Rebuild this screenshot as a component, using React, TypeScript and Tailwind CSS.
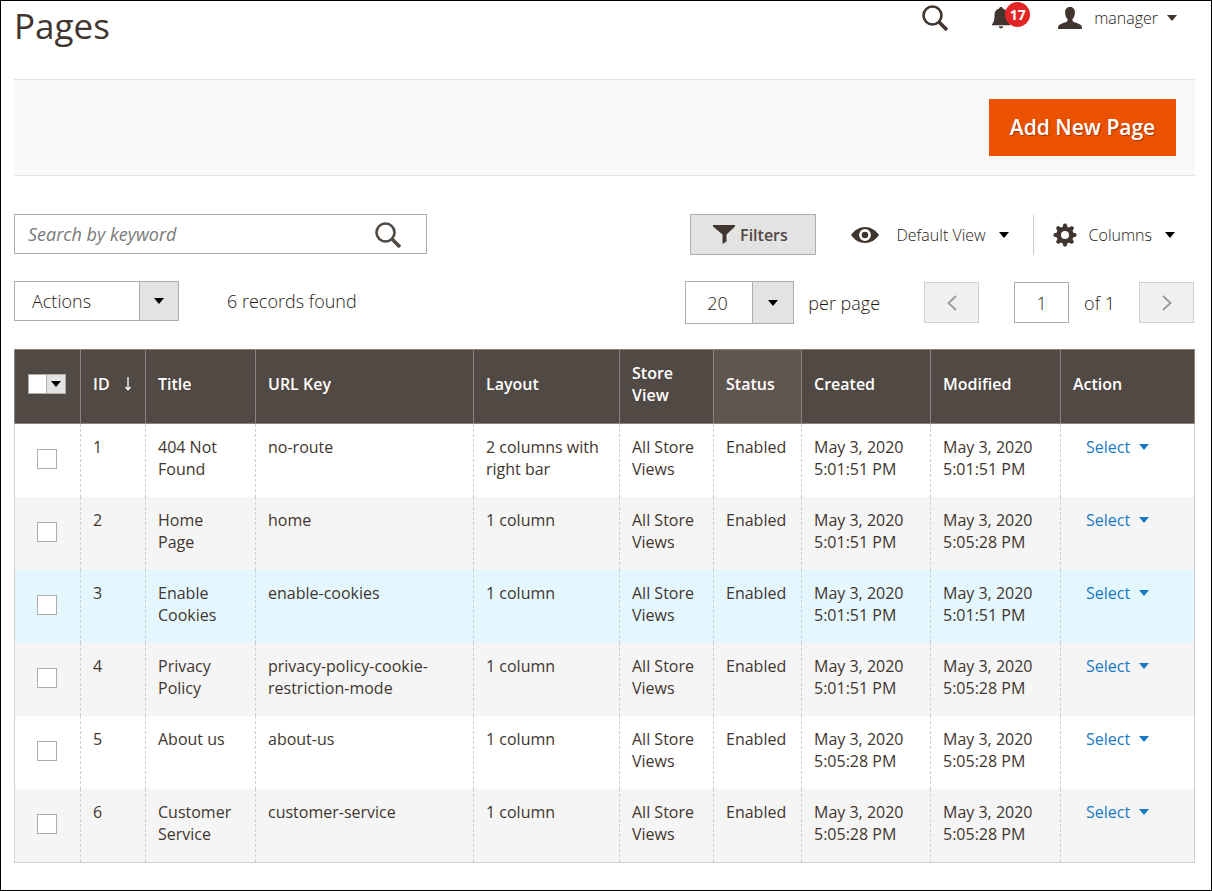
import { useState } from "react"

interface CmsPage {
  id: number
  title: string
  urlKey: string
  layout: string
  created: string
  modified: string
}

const PAGES: CmsPage[] = [
  { id: 1, title: "404 Not Found", urlKey: "no-route", layout: "2 columns with right bar", created: "5:01:51 PM", modified: "5:01:51 PM" },
  { id: 2, title: "Home Page", urlKey: "home", layout: "1 column", created: "5:01:51 PM", modified: "5:05:28 PM" },
  { id: 3, title: "Enable Cookies", urlKey: "enable-cookies", layout: "1 column", created: "5:01:51 PM", modified: "5:01:51 PM" },
  { id: 4, title: "Privacy Policy", urlKey: "privacy-policy-cookie-restriction-mode", layout: "1 column", created: "5:01:51 PM", modified: "5:05:28 PM" },
  { id: 5, title: "About us", urlKey: "about-us", layout: "1 column", created: "5:05:28 PM", modified: "5:05:28 PM" },
  { id: 6, title: "Customer Service", urlKey: "customer-service", layout: "1 column", created: "5:05:28 PM", modified: "5:05:28 PM" },
]

const HIGHLIGHTED_ID = 3

const TH = "border-x border-[#8a837f] px-3 pb-[5px] text-left align-middle font-semibold"
const TD = "border-x border-dashed border-[#d0d0d0] px-3 pt-3 pb-4 align-top"

function Caret({ className = "" }: { className?: string }) {
  return (
    <svg viewBox="0 0 10 6" className={`h-[6px] w-[10px] shrink-0 ${className}`} fill="currentColor" aria-hidden="true">
      <path d="M0 0h10L5 6z" />
    </svg>
  )
}

function SearchIcon() {
  return (
    <svg viewBox="0 0 26 26" className="size-[26px]" fill="none" stroke="currentColor" aria-hidden="true">
      <circle cx="10.5" cy="10.5" r="9" strokeWidth="2.6" />
      <path d="M17 17l8 8" strokeWidth="3.6" />
    </svg>
  )
}

function BellIcon() {
  return (
    <svg viewBox="0 0 20 22" className="h-[22px] w-5" fill="currentColor" aria-hidden="true">
      <path d="M10 0c1 0 1.800.7 1.800 1.600C15 2.400 16.500 4.800 16.500 8c0 5 .7 7.500 2.500 9.200V18.200H1v-1C2.800 15.500 3.500 13 3.500 8c0-3.200 1.500-5.600 4.700-6.400C8.200.7 9 0 10 0z" />
      <path d="M7.800 19.300h4.400c-.2 1.300-1 2.100-2.200 2.100s-2-.8-2.200-2.100z" />
    </svg>
  )
}

function UserIcon() {
  return (
    <svg viewBox="0 0 24 22" className="h-[22px] w-6" fill="currentColor" aria-hidden="true">
      <path d="M12 0c3 0 4.900 2 4.900 5.200 0 3-1 5.600-2.400 6.900-.3 1.600 0 2.400 1.300 2.900 3.200 1.200 5.600 1.800 7 2.900.9.700 1.200 1.900 1.200 4.100H0c0-2.200.3-3.400 1.200-4.100 1.400-1.100 3.800-1.700 7-2.900 1.300-.5 1.600-1.300 1.300-2.900C8.100 10.800 7.100 8.200 7.100 5.200 7.100 2 9 0 12 0z" />
    </svg>
  )
}

function FunnelIcon() {
  return (
    <svg viewBox="0 0 22 19" className="h-[19px] w-[22px]" fill="currentColor" aria-hidden="true">
      <path d="M0 0h22v1.500l-8.500 8v7L9.500 19V9.500L0 1.500z" />
    </svg>
  )
}

function EyeIcon() {
  return (
    <svg viewBox="0 0 28 16" className="h-4 w-7" aria-hidden="true">
      <path d="M0 8C3.500 3 8.500 0 14 0s10.500 3 14 8c-3.500 5-8.500 8-14 8S3.500 13 0 8z" fill="currentColor" />
      <circle cx="14" cy="8" r="4.600" fill="none" stroke="#fff" strokeWidth="2.600" />
    </svg>
  )
}

function GearIcon() {
  return (
    <svg viewBox="-12 -12 24 24" className="size-6" aria-hidden="true">
      <g fill="currentColor">
        {[0, 45, 90, 135, 180, 225, 270, 315].map((angle) => (
          <path key={angle} d="M-2.800-7L-1.500-11.200Q0-12 1.500-11.200L2.800-7z" transform={`rotate(${angle})`} />
        ))}
      </g>
      <circle r="6.300" fill="none" stroke="currentColor" strokeWidth="4.600" />
    </svg>
  )
}

function Chevron({ flip = false }: { flip?: boolean }) {
  return (
    <svg viewBox="0 0 10 16" className="h-4 w-[10px]" fill="none" stroke="currentColor" strokeWidth="1.800" aria-hidden="true">
      <path d={flip ? "M1 1l7.500 7L1 15" : "M9 1L1.500 8 9 15"} />
    </svg>
  )
}

function Header() {
  return (
    <header className="flex items-start justify-between pr-[18px]">
      <h1 className="text-[35px] leading-[50px] text-[#41362f]">Pages</h1>
      <div className="flex h-[34px] items-center text-[#41362f]">
        <button type="button" aria-label="Search" className="mr-[43px]">
          <SearchIcon />
        </button>
        <button type="button" aria-label="Notifications" className="relative mr-[47px]">
          <BellIcon />
          <span className="absolute -top-[5px] left-[14px] flex size-[25px] items-center justify-center rounded-full bg-[#e22626] text-sm font-bold text-white">
            17
          </span>
        </button>
        <button type="button" className="flex items-center">
          <UserIcon />
          <span className="ml-3 mr-[9px] text-base font-light text-[#1f1814]">manager</span>
          <Caret />
        </button>
      </div>
    </header>
  )
}

function Toolbar() {
  const [keyword, setKeyword] = useState("")

  return (
    <div className="mt-[38px] flex items-start justify-between">
      <form className="relative w-[35%]" onSubmit={(e) => e.preventDefault()}>
        <input
          type="text"
          aria-label="Search by keyword"
          placeholder="Search by keyword"
          value={keyword}
          onChange={(e) => setKeyword(e.target.value)}
          className="block h-10 w-full border border-[#adadad] bg-white pl-[13px] pr-16 text-lg text-[#303030] placeholder:italic placeholder:text-[#7a7a7a]"
        />
        <button type="submit" aria-label="Search" className="absolute right-[26px] top-2 text-[#514943]">
          <SearchIcon />
        </button>
      </form>

      <div className="flex items-center pr-5 text-base text-[#1f1814]">
        <button
          type="button"
          className="mr-[35px] flex h-[41px] w-[126px] items-center justify-center gap-[5px] border border-[#adadad] bg-[#e3e3e3] pr-[6px] font-semibold text-[#514943]"
        >
          <span className="text-[#41362f]"><FunnelIcon /></span>
          Filters
        </button>
        <button type="button" className="flex items-center font-light">
          <span className="mr-[17px] text-[#41362f]"><EyeIcon /></span>
          Default View
          <Caret className="ml-[13px] text-black" />
        </button>
        <span className="ml-6 mr-[19px] h-10 w-px bg-[#ccc]" />
        <button type="button" className="flex items-center font-light">
          <span className="mr-3 text-[#41362f]"><GearIcon /></span>
          Columns
          <Caret className="ml-[13px] text-black" />
        </button>
      </div>
    </div>
  )
}

function Pager() {
  return (
    <div className="mt-[26px] flex items-start justify-between text-lg font-light text-[#1f1814]">
      <div className="flex items-center">
        <div className="relative mr-12">
          <select
            aria-label="Actions"
            className="block h-10 w-[165px] appearance-none border border-[#adadad] bg-white pl-[17px]"
          >
            <option>Actions</option>
            <option>Delete</option>
            <option>Disable</option>
            <option>Enable</option>
            <option>Edit</option>
          </select>
          <span className="pointer-events-none absolute inset-y-0 right-0 flex w-10 items-center justify-center border border-[#adadad] bg-[#e3e3e3] text-black">
            <Caret />
          </span>
        </div>
        <span>6 records found</span>
      </div>

      <div className="flex items-center pr-px">
        <div className="relative mr-[14px]">
          <select
            id="page-size"
            defaultValue="20"
            className="block h-[43px] w-[109px] appearance-none border border-[#adadad] bg-white pl-[21px]"
          >
            <option>20</option>
            <option>30</option>
            <option>50</option>
            <option>100</option>
            <option>200</option>
          </select>
          <span className="pointer-events-none absolute inset-y-0 right-0 flex w-[42px] items-center justify-center border border-[#adadad] bg-[#e3e3e3] text-black">
            <Caret />
          </span>
        </div>
        <label htmlFor="page-size">per page</label>
        <button
          type="button"
          aria-label="Previous page"
          disabled
          className="ml-11 flex h-[41px] w-[55px] items-center justify-center border border-[#d0d0d0] bg-[#f0f0f0] text-[#999]"
        >
          <Chevron />
        </button>
        <input
          type="text"
          aria-label="Current page"
          defaultValue="1"
          className="ml-[35px] mr-[15px] h-[41px] w-[55px] border border-[#adadad] bg-white text-center"
        />
        <span>of 1</span>
        <button
          type="button"
          aria-label="Next page"
          disabled
          className="ml-6 flex h-[41px] w-[55px] items-center justify-center border border-[#d0d0d0] bg-[#f0f0f0] text-[#999]"
        >
          <Chevron flip />
        </button>
      </div>
    </div>
  )
}

function PagesTable() {
  return (
    <table className="mt-[25px] w-full table-fixed border-collapse border border-[#d0d0d0] text-base leading-[22px] text-[#41362f]">
      <colgroup>
        <col className="w-[66px]" />
        <col className="w-[65px]" />
        <col className="w-[110px]" />
        <col />
        <col className="w-[146px]" />
        <col className="w-[94px]" />
        <col className="w-[88px]" />
        <col className="w-[129px]" />
        <col className="w-[130px]" />
        <col className="w-[134px]" />
      </colgroup>
      <thead>
        <tr className="h-[74px] border border-[#8a837f] bg-[#514943] text-white">
          <th className={TH}>
            <button type="button" aria-label="Select rows" className="ml-px flex h-5 w-[38px] border border-[#adadad] align-middle">
              <span className="h-full w-[18px] border-r border-[#adadad] bg-white" />
              <span className="flex h-full flex-1 items-center justify-center bg-[#e3e3e3] text-black">
                <Caret />
              </span>
            </button>
          </th>
          <th className={TH}>
            <span className="flex items-center gap-[14px]">
              ID
              <svg viewBox="0 0 8 14" className="h-[14px] w-2" fill="none" stroke="currentColor" strokeWidth="1.300" aria-hidden="true">
                <path d="M4 0v12.500M1.500 10l2.500 2.700 2.500-2.700" />
              </svg>
            </span>
          </th>
          <th className={TH}>Title</th>
          <th className={TH}>URL Key</th>
          <th className={TH}>Layout</th>
          <th className={TH}>Store View</th>
          <th className={`${TH} bg-[#5f564f]`}>Status</th>
          <th className={TH}>Created</th>
          <th className={TH}>Modified</th>
          <th className={TH}>Action</th>
        </tr>
      </thead>
      <tbody>
        {PAGES.map((page) => (
          <tr
            key={page.id}
            className={`h-[73px] last:h-[74px] ${page.id === HIGHLIGHTED_ID ? "bg-[#e5f7fe]" : "even:bg-[#f5f5f5]"}`}
          >
            <td className="border-r border-dashed border-[#d0d0d0] pr-[2px] pb-[2px] align-middle">
              <input
                type="checkbox"
                aria-label={`Select ${page.title}`}
                className="mx-auto block size-5 appearance-none border border-[#adadad] bg-white checked:bg-[#514943]"
              />
            </td>
            <td className={TD}>{page.id}</td>
            <td className={TD}>{page.title}</td>
            <td className={TD}>{page.urlKey}</td>
            <td className={TD}>{page.layout}</td>
            <td className={TD}>All Store Views</td>
            <td className={TD}>Enabled</td>
            <td className={TD}>May 3, 2020 {page.created}</td>
            <td className={TD}>May 3, 2020 {page.modified}</td>
            <td className="pl-[25px] pt-3 pb-4 align-top">
              <button type="button" className="flex items-center gap-[9px] text-[#1979c3]">
                Select
                <Caret />
              </button>
            </td>
          </tr>
        ))}
      </tbody>
    </table>
  )
}

export default function App() {
  return (
    <div className="min-h-screen border border-black bg-white pl-[13px] pr-4 font-['Open_Sans',sans-serif]">
      <Header />
      <div className="mt-7 flex justify-end border-y border-[#e3e3e3] bg-[#f8f8f8] py-[19px] pr-[19px]">
        <button
          type="button"
          className="h-[57px] w-[187px] bg-[#eb5202] pt-px text-[21px] font-semibold text-white [text-shadow:1px_1px_1px_rgba(0,0,0,0.35)]"
        >
          Add New Page
        </button>
      </div>
      <Toolbar />
      <Pager />
      <PagesTable />
    </div>
  )
}
